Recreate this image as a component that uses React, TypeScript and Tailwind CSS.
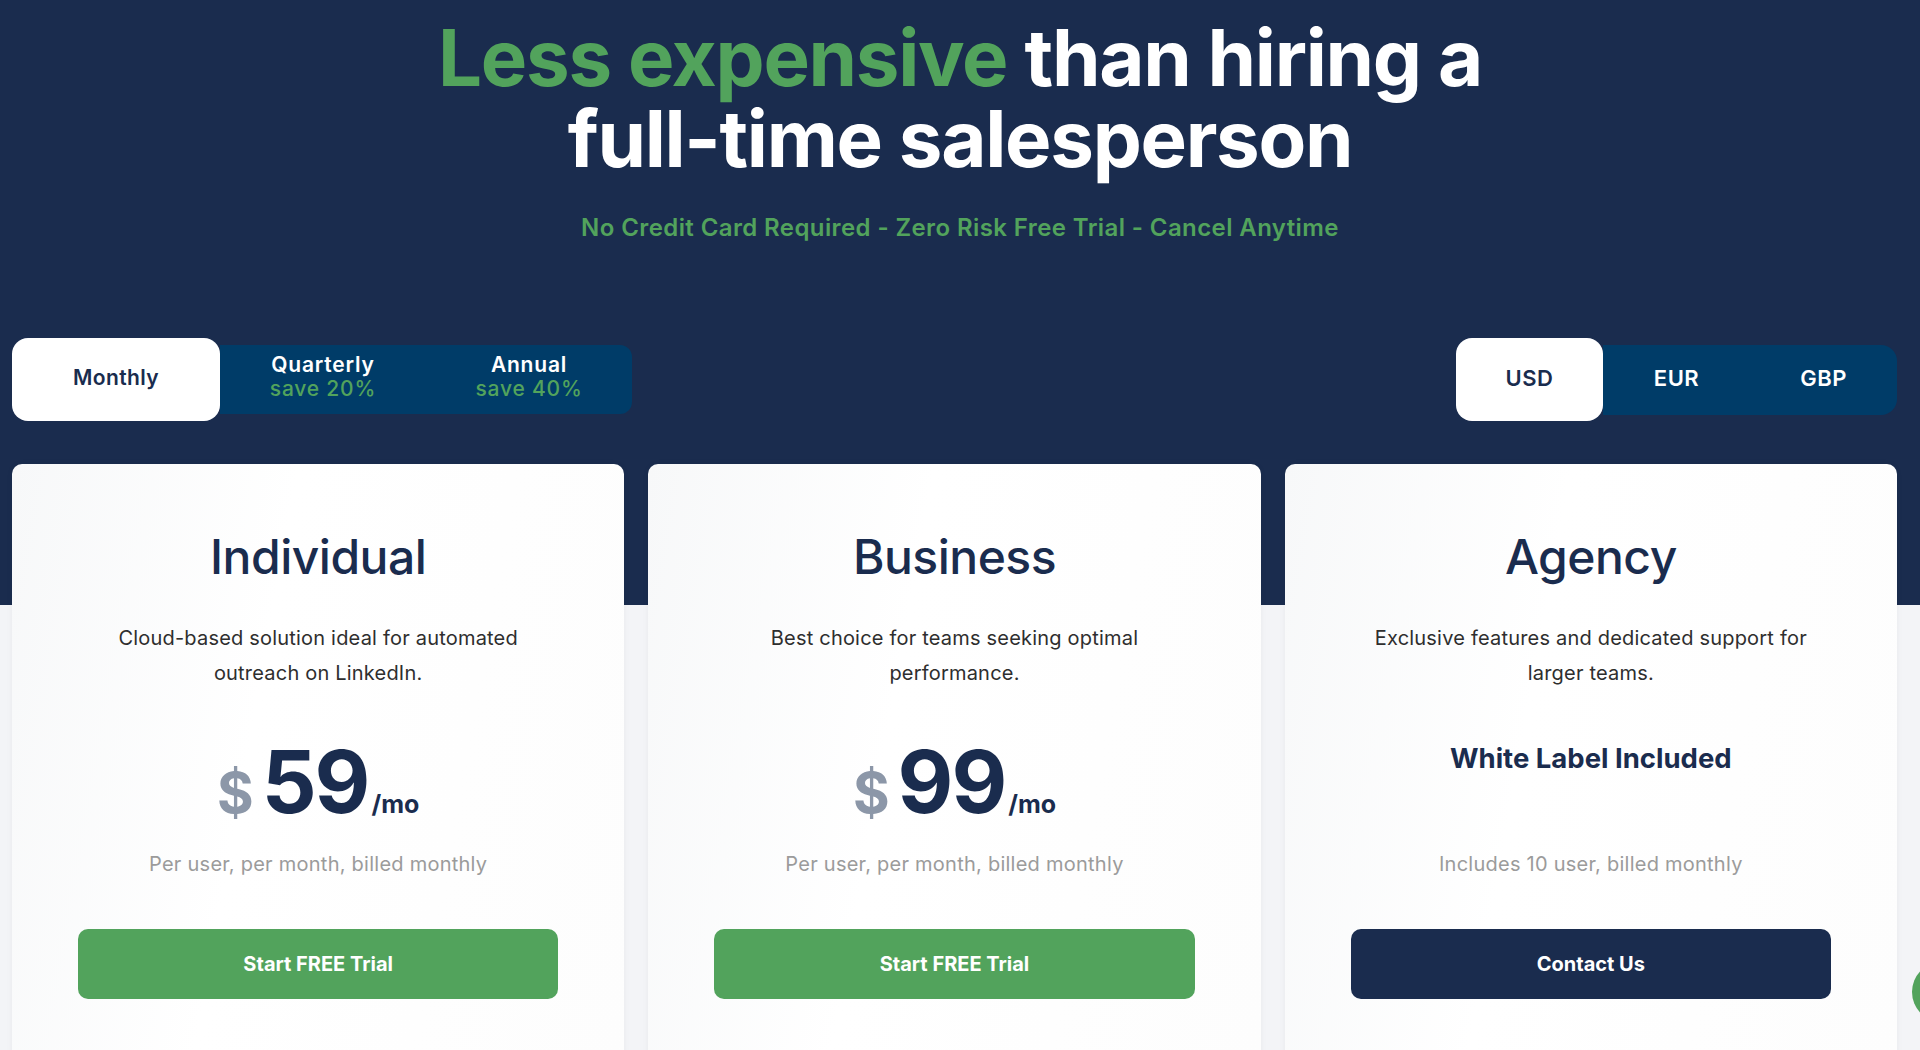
import { useState } from 'react';

const plans = [
  {
    name: 'Individual',
    desc: ['Cloud-based solution ideal for automated', 'outreach on LinkedIn.'],
    price: '59',
    note: 'Per user, per month, billed monthly',
    cta: 'Start FREE Trial',
    dark: false,
  },
  {
    name: 'Business',
    desc: ['Best choice for teams seeking optimal', 'performance.'],
    price: '99',
    note: 'Per user, per month, billed monthly',
    cta: 'Start FREE Trial',
    dark: false,
  },
  {
    name: 'Agency',
    desc: ['Exclusive features and dedicated support for', 'larger teams.'],
    price: null,
    note: 'Includes 10 user, billed monthly',
    cta: 'Contact Us',
    dark: true,
  },
];

const periods = [
  { label: 'Monthly', save: null },
  { label: 'Quarterly', save: 'save 20%' },
  { label: 'Annual', save: 'save 40%' },
];

const currencies = ['USD', 'EUR', 'GBP'];

export default function App() {
  const [period, setPeriod] = useState('Monthly');
  const [currency, setCurrency] = useState('USD');

  return (
    <div className="relative min-h-[1050px] overflow-hidden bg-[linear-gradient(#1a2c4e_0,#1a2c4e_605px,#f3f4f7_605px)] font-['Inter',sans-serif]">
      <div className="pt-[17px] text-center">
        <h1 className="text-[78px] font-bold leading-[81px] tracking-[-1.3px] text-white">
          <span className="text-[#52a35c]">Less expensive</span> than hiring a
          <br />
          full-time salesperson
        </h1>
        <p className="mt-[33px] text-[24px] font-semibold leading-[32px] tracking-[0.4px] text-[#52a35c]">
          No Credit Card Required - Zero Risk Free Trial - Cancel Anytime
        </p>
      </div>

      <div className="mt-[94px] flex items-center justify-between pl-[12px] pr-[23px]">
        {/* Billing period */}
        <div className="flex items-center">
          {periods.map((p) =>
            p.label === period ? (
              <button
                key={p.label}
                onClick={() => setPeriod(p.label)}
                className="flex h-[83px] w-[208px] items-center justify-center rounded-[16px] bg-white pb-[3px] text-[21px] font-semibold tracking-[0.4px] text-[#1a2c4e]"
              >
                {p.label}
              </button>
            ) : (
              <button
                key={p.label}
                onClick={() => setPeriod(p.label)}
                className="flex h-[69px] w-[206px] flex-col items-center justify-center bg-[#003c68] pb-[5px] text-[21px] font-semibold leading-[24px] tracking-[0.8px] text-white last:rounded-r-[12px]"
              >
                <span>{p.label}</span>
                {p.save && <span className="font-medium text-[#52a35c]">{p.save}</span>}
              </button>
            )
          )}
        </div>

        {/* Currency */}
        <div className="flex items-center">
          {currencies.map((c) =>
            c === currency ? (
              <button
                key={c}
                onClick={() => setCurrency(c)}
                className="flex h-[83px] w-[147px] items-center justify-center rounded-[16px] bg-white pb-[2px] text-[22px] font-semibold tracking-[0.5px] text-[#1a2c4e]"
              >
                {c}
              </button>
            ) : (
              <button
                key={c}
                onClick={() => setCurrency(c)}
                className="flex h-[70px] w-[147px] items-center justify-center bg-[#003c68] pb-[2px] text-[22px] font-semibold tracking-[0.5px] text-white last:rounded-r-[16px]"
              >
                {c}
              </button>
            )
          )}
        </div>
      </div>

      <div className="mt-[43px] grid grid-cols-3 gap-[24px] pl-[12px] pr-[23px]">
        {plans.map((plan) => (
          <div
            key={plan.name}
            className="h-[600px] rounded-t-[10px] bg-[linear-gradient(100deg,#f7f8f9,#ffffff_40%,#fdfdfd)] px-[66px] pt-[69px] text-center shadow-[0_0_6px_rgba(0,0,0,0.05)]"
          >
            <h2 className="text-[48px] font-medium leading-[48px] tracking-[-0.5px] text-[#1a2c4e]">{plan.name}</h2>
            <p className="mt-[40px] text-[20px] leading-[35px] tracking-[0.2px] text-[#2e2e2e]">
              {plan.desc[0]}
              <br />
              {plan.desc[1]}
            </p>
            <div className="mt-[47px] h-[85px]">
              {plan.price ? (
                <div className="flex items-baseline justify-center leading-none text-[#1a2c4e]">
                  <span className="mr-[8px] text-[56px] font-bold text-[#8c97a8]">$</span>
                  <span className="text-[86px] font-bold leading-[88px] tracking-[-2px]">{plan.price}</span>
                  <span className="ml-[3px] text-[25px] font-bold">/mo</span>
                </div>
              ) : (
                <div className="pt-[2px] text-[27.5px] font-bold leading-[36px] text-[#1a2c4e]">
                  White Label Included
                </div>
              )}
            </div>
            <p className="mt-[27px] text-[20px] leading-[28px] tracking-[0.25px] text-[#9b9b9b]">{plan.note}</p>
            <button
              className={`mt-[51px] flex h-[70px] w-full items-center justify-center rounded-[10px] text-[20px] font-bold text-white ${
                plan.dark ? 'bg-[#1a2c4e]' : 'bg-[#52a35c]'
              }`}
            >
              {plan.cta}
            </button>
          </div>
        ))}
      </div>

      {/* chat bubble peeking in */}
      <div className="absolute right-[-52px] top-[962px] h-[60px] w-[60px] rounded-full bg-[#52a35c]" />
    </div>
  );
}
